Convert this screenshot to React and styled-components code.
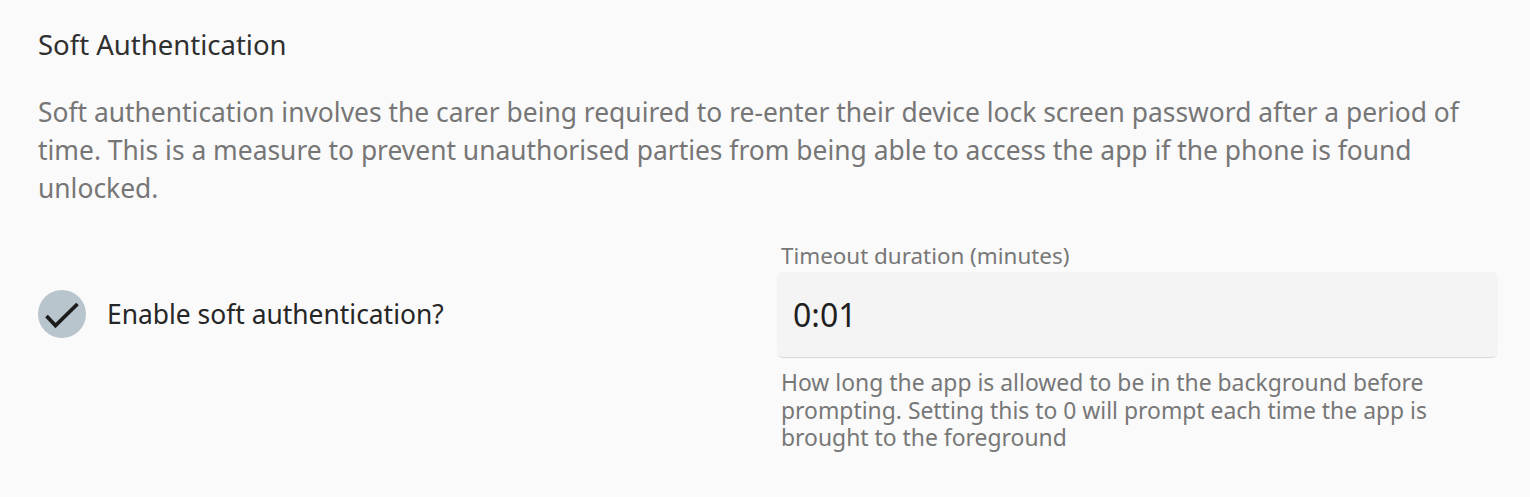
import { useState } from "react";
import styled, { createGlobalStyle } from "styled-components";

const GlobalStyle = createGlobalStyle`
	body {
		margin: 0;
		background-color: #fafafa;
		font-family: "Noto Sans", "Open Sans", sans-serif;
	}
`;

const Section = styled.section`
	padding: 29px 32px 40px 38px;
`;

const Title = styled.h2`
	margin: 0 0 32px;
	font-size: 27.5px;
	line-height: 32px;
	font-weight: 400;
	color: #2f2f2f;
`;

const Description = styled.p`
	margin: 0 0 36px;
	font-size: 26.4px;
	line-height: 38px;
	color: #767676;
`;

const Row = styled.div`
	display: grid;
	grid-template-columns: 1fr 1fr;
	column-gap: 18px;
`;

const CheckCell = styled.label`
	display: flex;
	align-items: center;
	gap: 21px;
	height: 85px;
	margin-top: 28px;
	cursor: pointer;
	font-size: 26.4px;
	color: #262626;
`;

const Tick = styled.span`
	width: 48px;
	height: 48px;
	border-radius: 50%;
	flex-shrink: 0;
	display: flex;
	align-items: center;
	justify-content: center;
	background-color: ${({ $checked }) => ($checked ? "#b8c5cd" : "#e3e7ea")};
`;

const Field = styled.div`
	display: flex;
	flex-direction: column;
`;

const FieldLabel = styled.label`
	padding-left: 4px;
	margin-bottom: 3px;
	font-size: 22.4px;
	line-height: 26px;
	color: #777;
`;

const Input = styled.input`
	box-sizing: border-box;
	height: 85px;
	border: none;
	border-radius: 6px;
	padding: 0 16px;
	background-color: #f4f4f4;
	box-shadow: 0 2px 1px -1px #d6d6d6;
	font-family: inherit;
	font-size: 32px;
	color: #1f1f1f;
	outline: none;
`;

const Help = styled.p`
	margin: 12px 0 0;
	padding: 0 14px 0 4px;
	font-size: 22.9px;
	line-height: 27.5px;
	color: #777;
`;

const SoftAuthentication = () => {
	const [enabled, setEnabled] = useState(true);
	const [timeout, setTimeoutValue] = useState("0:01");

	return (
		<Section>
			<Title>Soft Authentication</Title>
			<Description>
				Soft authentication involves the carer being required to re-enter their
				device lock screen password after a period of time. This is a measure to
				prevent unauthorised parties from being able to access the app if the
				phone is found unlocked.
			</Description>
			<Row>
				<CheckCell onClick={() => setEnabled((v) => !v)}>
					<Tick $checked={enabled}>
						{enabled && (
							<svg width="48" height="48" viewBox="0 0 48 48">
								<polyline
									points="8.5,26 17.5,35.5 39.5,14"
									fill="none"
									stroke="#1c1c1c"
									strokeWidth="3.8"
								/>
							</svg>
						)}
					</Tick>
					Enable soft authentication?
				</CheckCell>
				<Field>
					<FieldLabel htmlFor="timeout">Timeout duration (minutes)</FieldLabel>
					<Input
						id="timeout"
						value={timeout}
						onChange={(e) => setTimeoutValue(e.target.value)}
					/>
					<Help>
						How long the app is allowed to be in the background before
						prompting. Setting this to 0 will prompt each time the app is
						brought to the foreground
					</Help>
				</Field>
			</Row>
		</Section>
	);
};

const App = () => (
	<>
		<GlobalStyle />
		<SoftAuthentication />
	</>
);

export default App;
